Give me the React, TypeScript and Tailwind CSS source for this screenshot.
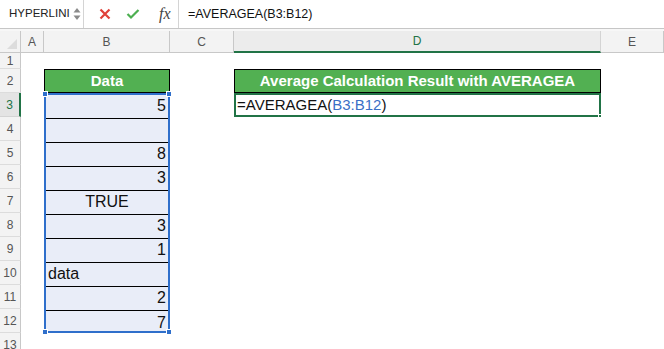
import React from 'react';

const font = { fontFamily: '"Liberation Sans", Arial, sans-serif' };

const dataRows: { v: string; align: 'right' | 'center' | 'left' }[] = [
  { v: '5', align: 'right' },
  { v: '', align: 'right' },
  { v: '8', align: 'right' },
  { v: '3', align: 'right' },
  { v: 'TRUE', align: 'center' },
  { v: '3', align: 'right' },
  { v: '1', align: 'right' },
  { v: 'data', align: 'left' },
  { v: '2', align: 'right' },
  { v: '7', align: 'right' },
];

const cols = ['A', 'B', 'C', 'D', 'E'];

function FormulaBar() {
  return (
    <div className="flex h-[29px] items-center border-b border-[#c6c6c6] bg-white">
      <div className="flex h-full w-[84px] items-center border-r border-[#d4d4d4] pl-[9px]">
        <span className="w-[64px] text-[11.5px] text-[#222]">HYPERLINI</span>
        <svg width="8" height="16" viewBox="0 0 8 16">
          <path d="M4 2 L7.5 6.5 H0.5 Z" fill="#8a8a8a" />
          <path d="M4 14 L7.5 9.5 H0.5 Z" fill="#8a8a8a" />
        </svg>
      </div>
      <div className="flex h-full w-[95px] items-center border-r border-[#d4d4d4] pl-[15px]">
        <svg width="12" height="12" viewBox="0 0 12 12">
          <path d="M1.5 1.5 L10.5 10.5 M10.5 1.5 L1.5 10.5" stroke="#e0413a" strokeWidth="2.2" />
        </svg>
        <svg width="14" height="12" viewBox="0 0 14 12" className="ml-[15px]">
          <path d="M1.5 6 L5 9.5 L12.5 2" stroke="#4caf50" strokeWidth="2.2" fill="none" />
        </svg>
        <span className="ml-[19px] text-[16px] italic text-[#444]" style={{ fontFamily: '"Liberation Serif", serif' }}>
          fx
        </span>
      </div>
      <div className="pl-[9px] text-[12.5px] text-[#111]">=AVERAGEA(B3:B12)</div>
    </div>
  );
}

export default function App() {
  return (
    <div className="h-[349px] w-[664px] overflow-hidden bg-white" style={font}>
      <FormulaBar />
      <div className="h-[2px] bg-[#f7f7f7]" />
      <div className="grid grid-cols-[21px_23px_126px_64px_367px_1fr] grid-rows-[22px_16px_repeat(12,24px)]">
        {/* column headers */}
        <div className="relative border-b border-r border-[#c8c8c8] bg-[#f3f3f3]">
          <svg className="absolute bottom-[3px] right-[3px]" width="10" height="10" viewBox="0 0 10 10">
            <path d="M10 0 V10 H0 Z" fill="#dcdcdc" />
          </svg>
        </div>
        {cols.map((c) => (
          <div
            key={c}
            className={`flex items-center justify-center text-[12px] ${
              c === 'D'
                ? 'border-b-2 border-r border-b-[#217346] border-r-[#d4d4d4] bg-[#ececec] text-[#217346]'
                : 'border-b border-r border-[#c8c8c8] bg-[#f3f3f3] text-[#555]'
            }`}
          >
            {c}
          </div>
        ))}

        {/* row 1 */}
        <RowHead n={1} />
        <div className="col-span-5" />

        {/* row 2 */}
        <RowHead n={2} />
        <div />
        <div className="flex items-center justify-center border border-black bg-[#52b052] text-[15px] font-bold text-white">
          Data
        </div>
        <div />
        <div className="flex items-center justify-center border border-black bg-[#52b052] text-[15px] font-bold text-white">
          Average Calculation Result with AVERAGEA
        </div>
        <div />

        {/* row 3 */}
        <RowHead n={3} active />
        <div />
        <div className="relative row-span-10 border-2 border-[#2f6fcb] bg-[#e9edf8]">
          <div className="flex h-full flex-col">
            {dataRows.map((r, i) => (
              <div
                key={i}
                className={`flex h-[24px] shrink-0 items-end px-[2px] text-[16px] text-[#111] ${
                  i < 9 ? 'border-b border-black' : ''
                } ${r.align === 'right' ? 'justify-end' : r.align === 'center' ? 'justify-center' : 'justify-start'}`}
              >
                {r.v}
              </div>
            ))}
          </div>
          <Handle pos="-left-[4px] -top-[4px]" />
          <Handle pos="-right-[4px] -top-[4px]" />
          <Handle pos="-left-[4px] -bottom-[4px]" />
          <Handle pos="-right-[4px] -bottom-[4px]" />
        </div>
        <div />
        <div className="relative flex items-center border-2 border-[#217346] bg-white pl-[1px] text-[15px] text-[#111]">
          <span>=AVERAGEA(</span>
          <span className="text-[#3a6fc6]">B3:B12</span>
          <span>)</span>
          <div className="absolute -bottom-[3px] -right-[3px] h-[4px] w-[4px] border border-white bg-[#217346]" />
        </div>
        <div />

        {[4, 5, 6, 7, 8, 9, 10, 11, 12].map((n) => (
          <React.Fragment key={n}>
            <RowHead n={n} />
            <div />
            <div />
            <div />
            <div />
          </React.Fragment>
        ))}
        <RowHead n={13} />
        <div className="col-span-5" />
      </div>
    </div>
  );
}

function RowHead({ n, active }: { n: number; active?: boolean }) {
  return (
    <div
      className={`flex items-center justify-center text-[12px] ${
        active
          ? 'border-b border-r-2 border-b-[#d4d4d4] border-r-[#217346] bg-[#e4e4e4] text-[#217346]'
          : 'border-b border-r border-b-[#dcdcdc] border-r-[#c8c8c8] bg-[#f3f3f3] text-[#555]'
      }`}
    >
      {n}
    </div>
  );
}

function Handle({ pos }: { pos: string }) {
  return <div className={`absolute ${pos} h-[6px] w-[6px] border border-white bg-[#2f6fcb]`} />;
}
